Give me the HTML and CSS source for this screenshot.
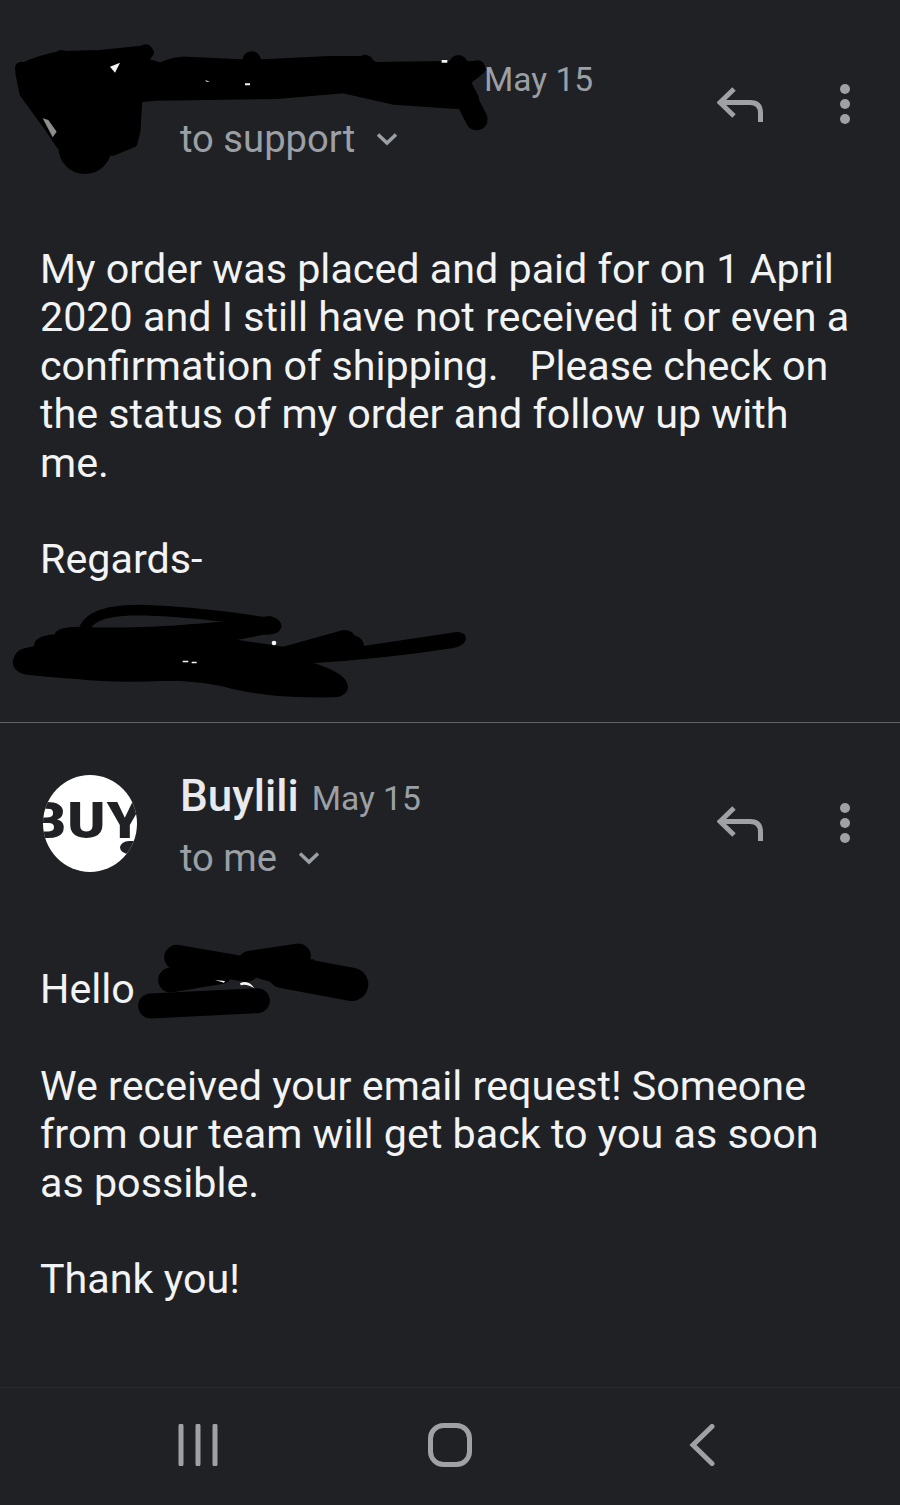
FILE: index.html
```html
<!DOCTYPE html>
<html lang="en">
<head>
<meta charset="utf-8">
<title>Email thread</title>
<link rel="stylesheet" href="styles.css">
</head>
<body>
<main class="thread">
  <article class="message message-first">
    <header class="head">
      <div class="avatar-slot"></div>
      <div class="meta">
        <div class="meta-line"><span class="sender sender-hidden"></span><span class="date">May 15</span></div>
        <div class="meta-line to"><span>to support</span>
          <svg class="chev" viewBox="0 0 22 14"><path d="M2 2.500 11 11 20 2.500"/></svg></div>
      </div>
      <svg class="reply" viewBox="0 0 46 36"><path d="M17 2 3 15.500 17 29M3 15.500H33Q43.500 15.500 43.500 26V35"/></svg>
      <svg class="dots" viewBox="0 0 12 42"><circle cx="6" cy="6" r="5"/><circle cx="6" cy="21" r="5"/><circle cx="6" cy="36" r="5"/></svg>
    </header>
    <div class="body">My order was placed and paid for on 1 April 2020 and I still have not received it or even a confirmation of shipping.&nbsp;&nbsp; Please check on the status of my order and follow up with me.<br><br>Regards-</div>
  </article>
  <article class="message message-second">
    <header class="head">
      <div class="avatar-slot"><div class="avatar"><span class="avatar-text">BUY</span><span class="avatar-notch"></span></div></div>
      <div class="meta">
        <div class="meta-line"><span class="sender">Buylili</span><span class="date">May 15</span></div>
        <div class="meta-line to"><span>to me</span>
          <svg class="chev" viewBox="0 0 22 14"><path d="M2 2.500 11 11 20 2.500"/></svg></div>
      </div>
      <svg class="reply" viewBox="0 0 46 36"><path d="M17 2 3 15.500 17 29M3 15.500H33Q43.500 15.500 43.500 26V35"/></svg>
      <svg class="dots" viewBox="0 0 12 42"><circle cx="6" cy="6" r="5"/><circle cx="6" cy="21" r="5"/><circle cx="6" cy="36" r="5"/></svg>
    </header>
    <div class="body body-second">Hello<br><br>We received your email request! Someone from our team will get back to you as soon as possible.<br><br>Thank you!</div>
  </article>
</main>
<nav class="nav">
  <svg class="nav-recent" viewBox="0 0 40 42"><path d="M3 2V40M20 2V40M37 2V40"/></svg>
  <svg class="nav-home" viewBox="0 0 44 44"><rect x="2.500" y="2.500" width="39" height="39" rx="13"/></svg>
  <svg class="nav-back" viewBox="0 0 26 42"><path d="M23 2.500 4 21 23 39.500"/></svg>
</nav>

<svg class="scribble scribble-top" viewBox="0 0 1500 480">
  <path class="ink" d="M60 115 Q120 85 185 75 L300 72 L440 58 L450 68 L430 95 L480 110 Q530 90 560 92 L720 100 L790 100 L990 90 L1095 90 L1125 108 L1340 105 L1440 105 L1445 118 L1400 155 L1425 205 L1415 222 L1370 225 L1180 212 L1030 178 L830 195 L470 200 L415 205 L410 300 L400 340 L340 365 L180 345 L150 300 L70 190 L58 130Z"/>
  <circle class="ink-solid" cx="65" cy="115" r="20"/>
  <circle class="ink-solid" cx="185" cy="85" r="25"/>
  <circle class="ink-solid" cx="437" cy="65" r="22"/>
  <circle class="ink-solid" cx="755" cy="92" r="28"/>
  <circle class="ink-solid" cx="1375" cy="103" r="28"/>
  <circle class="ink-solid" cx="1432" cy="113" r="22"/>
  <circle class="ink-solid" cx="1095" cy="100" r="26"/>
  <circle class="ink-solid" cx="255" cy="352" r="80"/>
  <path class="ink-line" d="M1400 210 1430 268"/>
  <path class="fleck" d="M330 110 360 98 345 128Z"/>
  <path class="fleck" d="M615 150 630 155 620 155ZM735 160H750V166H735ZM1325 90H1342V98H1325Z"/>
  <path class="fleck-grey" d="M128 265 145 270 170 305 158 322Z"/>
</svg>
<svg class="scribble scribble-sign" viewBox="0 0 1500 420">
  <path class="ink-fine" d="M40 215Q45 180 80 175L105 170Q100 140 165 135Q170 112 240 112Q400 122 660 97L810 80Q845 90 842 112Q835 135 790 132L700 150 850 172 1030 122Q1055 122 1062 138Q1090 145 1090 170L1370 128Q1400 130 1395 150Q1390 165 1360 172Q1150 205 930 218Q1040 250 1042 290Q1040 318 1000 320Q880 322 800 312Q730 305 660 285Q580 270 500 270Q350 278 230 265Q90 255 70 250Q40 240 40 215Z"/>
  <path class="sign-loop" d="M255 112Q280 60 420 60Q600 65 810 100"/>
  <circle class="fleck" cx="822" cy="159" r="7"/>
  <path class="fleck" d="M548 212H565V217H548ZM575 215H590V220H575Z"/>
</svg>
<svg class="scribble scribble-hello" viewBox="0 0 1110 300">
  <path class="stroke-thick" d="M470 82 680 118"/>
  <path class="stroke-thick" d="M690 100 835 78"/>
  <path class="stroke-wide" d="M790 125 995 163"/>
  <path class="stroke-thick" d="M452 150 600 125"/>
  <path class="stroke-thick" d="M392 228 712 212"/>
  <path class="ink-fine" d="M650 100 880 90 880 185 740 150 690 135Z"/>
  <path class="fleck" d="M585 150 615 153 612 158ZM660 160Q685 148 703 175Q680 160 662 166Z"/>
</svg>
</body>
</html>
```

FILE: styles.css
```css
* { box-sizing: border-box; }
html, body { margin: 0; height: 100%; }
body {
  position: relative;
  display: flex;
  flex-direction: column;
  height: 1505px;
  overflow: hidden;
  background: #202124;
  font-family: Roboto, "Liberation Sans", sans-serif;
  color: #e8eaed;
}
.thread { flex: 1; }
.message { padding-top: 50px; }
.message-first { height: 723px; border-bottom: 1px solid #5f6368; }
.message-second { padding-top: 46px; }
.head { display: flex; align-items: flex-start; padding: 0 49px 0 40px; }
.avatar-slot { flex: 0 0 140px; padding: 6px 0 0 3px; }
.avatar {
  position: relative;
  width: 94px;
  height: 97px;
  border-radius: 50%;
  overflow: hidden;
  background: #fff;
}
.avatar-text {
  position: absolute;
  left: -14px;
  top: 18px;
  font: 900 50px/56px Roboto, sans-serif;
  letter-spacing: 1px;
  color: #202124;
  white-space: nowrap;
  transform: scaleX(1.15);
  transform-origin: left center;
}
.avatar-notch {
  position: absolute;
  left: 77px;
  top: 66px;
  width: 18px;
  height: 13px;
  border-radius: 50% 0 0 50%;
  background: #202124;
}
.meta { flex: 1; margin-top: -1px; }
.meta-line { display: flex; align-items: center; height: 60px; }
.sender { font-size: 44px; font-weight: 500; margin: 0 13px 4px 0; }
.sender-hidden { width: 289px; margin: 0 15px 0 0; }
.date { font-size: 33.500px; color: #9aa0a6; }
.to { font-size: 38.200px; color: #9aa0a6; }
.chev { width: 22px; height: 14px; margin-left: 21px; fill: none; stroke: #9aa0a6; stroke-width: 3.500; }
.reply { width: 46px; height: 36px; margin: 37px 76px 0 0; fill: none; stroke: #a0a1a4; stroke-width: 5; }
.dots { width: 12px; height: 42px; margin-top: 33px; fill: #a0a1a4; }
.body {
  margin-top: 76px;
  padding: 0 40px;
  font-size: 41.250px;
  line-height: 48.400px;
  color: #f1f3f4;
}
.body-second { margin-top: 77px; }
.nav {
  flex: 0 0 118px;
  display: flex;
  align-items: center;
  border-top: 1px solid #292a2d;
  padding: 0 0 4px 178px;
}
.nav svg { fill: none; stroke: #a0a1a4; stroke-linecap: round; }
.nav-recent { width: 40px; height: 42px; stroke-width: 5; }
.nav-home { width: 44px; height: 44px; margin-left: 210px; stroke-width: 5; }
.nav-back { width: 26px; height: 42px; margin-left: 217px; stroke-width: 5; }
.scribble { position: absolute; left: 0; width: 500px; }
.scribble-top { top: 30px; height: 160px; }
.scribble-sign { top: 590px; height: 140px; }
.scribble-hello { left: 20px; top: 930px; width: 370px; height: 100px; }
.ink { fill: #000; stroke: #000; stroke-width: 24; stroke-linejoin: round; }
.ink-fine { fill: #000; stroke: #000; stroke-width: 4; stroke-linejoin: round; }
.ink-solid { fill: #000; }
.ink-line { fill: none; stroke: #000; stroke-width: 66; stroke-linecap: round; }
.sign-loop { fill: none; stroke: #000; stroke-width: 32; stroke-linecap: round; }
.stroke-thick { fill: none; stroke: #000; stroke-width: 75; stroke-linecap: round; }
.stroke-wide { fill: none; stroke: #000; stroke-width: 100; stroke-linecap: round; }
.fleck { fill: #f4f4f4; }
.fleck-grey { fill: #8d8d8d; }
```
